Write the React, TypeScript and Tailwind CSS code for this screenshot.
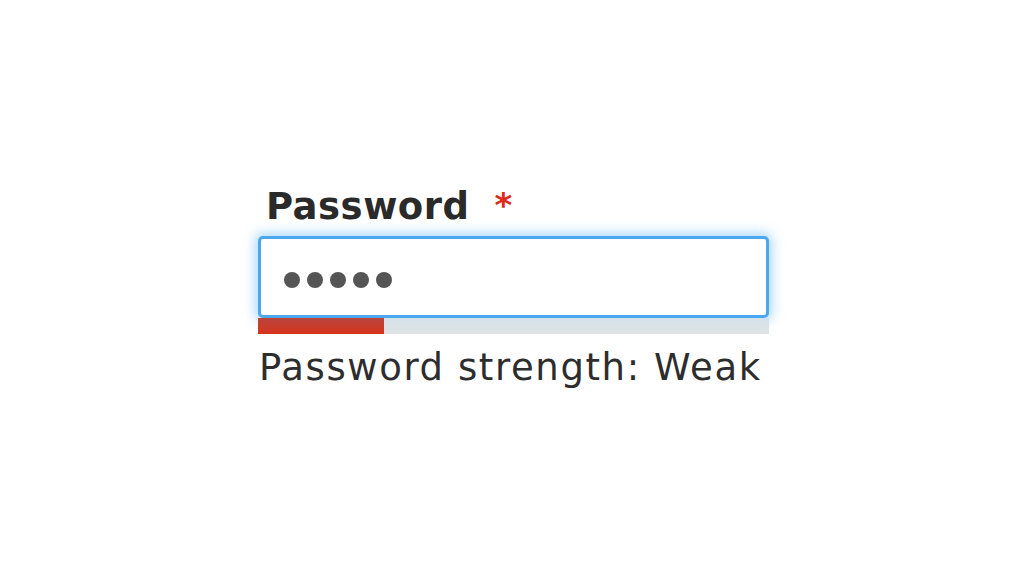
export default function App() {
  const dots = [0, 1, 2, 3, 4];
  return (
    <div className="w-[1024px] h-[576px] bg-white font-['DejaVu_Sans',sans-serif] text-[#2d2d2d]">
      <div className="w-[511px] ml-[258px] pt-[185px] flex flex-col">
        <label className="flex items-start pl-[8px] text-[37px] leading-[44px] font-bold tracking-[0.5px] text-[#2a2a2a]">
          Password
          <span className="ml-[25px] text-[34px] leading-[40px] text-[#e0281b]">*</span>
        </label>
        <div className="mt-[7px] h-[82px] rounded-[5px] border-[3px] border-[#4ba8f0] bg-white shadow-[0_0_12px_3px_rgba(100,185,255,0.55)] flex items-center pl-[23px] pt-[6px]">
          <div className="flex gap-[7px]">
            {dots.map((d) => (
              <span key={d} className="block w-[16px] h-[16px] rounded-full bg-[#555555]" />
            ))}
          </div>
        </div>
        <div className="h-[16px] flex bg-gradient-to-b from-[#d3e2ea] to-[#e0e2e2]">
          <div className="w-[126px] h-full bg-gradient-to-b from-[#b8443a] to-[#d8321a]" />
        </div>
        <p className="mt-[12px] pl-[1px] text-[37px] leading-[44px] tracking-[1.6px] text-[#2d2d2d]">
          Password strength: Weak
        </p>
      </div>
    </div>
  );
}
